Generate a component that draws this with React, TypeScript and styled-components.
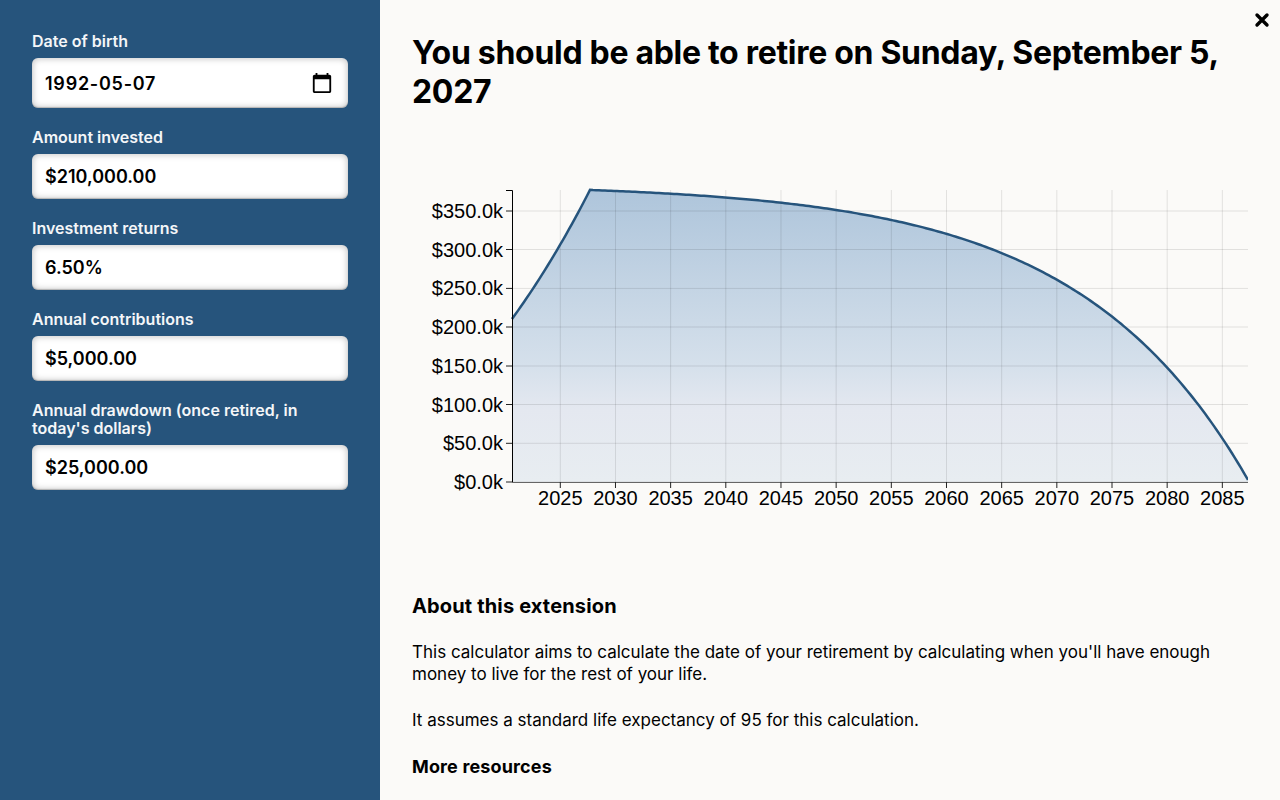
import React from "react";
import styled, { createGlobalStyle } from "styled-components";

const Global = createGlobalStyle`
  html, body { margin: 0; padding: 0; height: 100%; overflow: hidden; }
  body { font-family: Inter, "Liberation Sans", sans-serif; background: #fbfaf8; color: #000; }
`;
const Page = styled.div`display: flex; height: 800px; overflow: hidden; position: relative;`;
const Sidebar = styled.aside`
  width: 380px; flex: none; box-sizing: border-box; background: #26547c;
  padding: 32px; display: flex; flex-direction: column; gap: 20px;
`;
const Field = styled.div`display: flex; flex-direction: column; gap: 8px;`;
const Label = styled.label`color: #f4f6f8; font-size: 16px; line-height: 18px; font-weight: 600;`;
const InputBox = styled.div<{ $tall?: boolean }>`
  height: ${p => (p.$tall ? 50 : 45)}px; box-sizing: border-box; background: #fff; border-radius: 6px;
  box-shadow: inset 0 0 6px 1px rgba(0,0,0,.22), inset 0 -1px 1px rgba(0,0,0,.2);
  display: flex; align-items: center; padding: 0 15px 0 13px;
`;
const TextInput = styled.input<{ $date?: boolean }>`
  flex: 1; min-width: 0; border: 0; outline: 0; background: transparent; padding: 0;
  font: 600 18px Inter, sans-serif; color: #000;
  letter-spacing: ${p => (p.$date ? "0.75px" : "0")};
`;
const Main = styled.main`flex: 1; min-width: 0; box-sizing: border-box; padding: 33px 32px 0;`;
const Title = styled.h1`margin: 0; font-size: 32px; line-height: 39px; font-weight: 700; letter-spacing: -0.3px;`;
const ChartSvg = styled.svg`display: block; margin-top: 39px; width: 836px; height: 400px;`;
const Heading = styled.h2`margin: 44px 0 0; font-size: 20px; line-height: 24px; font-weight: 700; letter-spacing: 0.15px;`;
const Para = styled.p`margin: 23px 0 24px; font-size: 17px; line-height: 22px; font-weight: 400;`;
const Sub = styled.h3`margin: 25px 0 0; font-size: 18px; line-height: 22px; font-weight: 700; letter-spacing: 0.14px;`;
const CloseButton = styled.button`
  position: absolute; top: 12px; right: 10px; width: 16px; height: 16px; padding: 0; border: 0;
  background: none; display: block;
`;
const AxisText = styled.text`font: 20px "Liberation Sans", Arial, sans-serif; fill: #000;`;

function heightAt(x: number) {
  return x <= 590 ? -144 + 307 * Math.exp(0.0045 * (x - 512)) : 298.1 - 6.1 * Math.exp(0.0059 * (x - 590));
}
const xs: number[] = [];
for (let x = 512; x < 1248; x += 3) xs.push(x);
xs.push(590, 1248);
xs.sort((a, b) => a - b);
const line = xs.map((x, i) => `${i ? "L" : "M"}${x},${(482 - heightAt(x)).toFixed(2)}`).join("");

const OX = 412, OY = 150;
const yTicks = [["$0.0k",482],["$50.0k",443.3],["$100.0k",404.5],["$150.0k",366],["$200.0k",327],["$250.0k",288.4],["$300.0k",249.5],["$350.0k",211]] as const;
const xTicks = Array.from({ length: 13 }, (_, i) => ({ label: String(2025 + i * 5), x: 560.3 + i * 55.17 }));

function Chart() {
  return (
    <ChartSvg viewBox={`${OX} ${OY} 836 400`}>
      <defs>
        <linearGradient id="fill" x1="0" y1="190" x2="0" y2="482" gradientUnits="userSpaceOnUse">
          <stop offset="0" stopColor="#aec5db" />
          <stop offset="0.6" stopColor="#d5e0eb" />
          <stop offset="0.75" stopColor="#e4e8f0" />
          <stop offset="1" stopColor="#e8edf1" />
        </linearGradient>
      </defs>
      <path d={`${line}L1248,482L512,482Z`} fill="url(#fill)" />
      {yTicks.map(([, y]) => <line key={y} x1={512} x2={1248} y1={y} y2={y} stroke="#000" strokeOpacity={0.1} />)}
      {xTicks.map(t => <line key={t.x} x1={t.x} x2={t.x} y1={190} y2={482} stroke="#000" strokeOpacity={0.1} />)}
      <path d={line} fill="none" stroke="#26547c" strokeWidth={2.5} />
      <path d="M506,190.5H512.5V482" fill="none" stroke="#000" />
      <line x1={512} x2={1248} y1={482.5} y2={482.5} stroke="#666" />
      {yTicks.map(([label, y]) => (
        <g key={label}>
          <line x1={506} x2={512} y1={y} y2={y} stroke="#222" />
          <AxisText x={503} y={y + 7} textAnchor="end">{label}</AxisText>
        </g>
      ))}
      {xTicks.map(t => (
        <g key={t.label}>
          <line x1={t.x} x2={t.x} y1={482} y2={488} stroke="#222" />
          <AxisText x={t.x} y={505} textAnchor="middle">{t.label}</AxisText>
        </g>
      ))}
    </ChartSvg>
  );
}

const fields = [
  ["Amount invested", "$210,000.00"],
  ["Investment returns", "6.50%"],
  ["Annual contributions", "$5,000.00"],
  ["Annual drawdown (once retired, in today's dollars)", "$25,000.00"],
];

export default function App() {
  return (
    <Page>
      <Global />
      <Sidebar>
        <Field>
          <Label>Date of birth</Label>
          <InputBox $tall>
            <TextInput $date readOnly value="1992-05-07" />
            <svg width="22" height="22" viewBox="0 0 24 24">
              <path d="M20 3h-1V1h-2v2H7V1H5v2H4c-1.1 0-2 .9-2 2v16c0 1.1.9 2 2 2h16c1.1 0 2-.9 2-2V5c0-1.1-.9-2-2-2zm0 18H4V8h16v13z" fill="#000" />
            </svg>
          </InputBox>
        </Field>
        {fields.map(([l, v]) => (
          <Field key={l}>
            <Label>{l}</Label>
            <InputBox><TextInput readOnly value={v} /></InputBox>
          </Field>
        ))}
      </Sidebar>
      <Main>
        <Title>You should be able to retire on Sunday, September 5, 2027</Title>
        <Chart />
        <Heading>About this extension</Heading>
        <Para>This calculator aims to calculate the date of your retirement by calculating when you'll have enough money to live for the rest of your life.</Para>
        <Para>It assumes a standard life expectancy of 95 for this calculation.</Para>
        <Sub>More resources</Sub>
      </Main>
      <CloseButton aria-label="Close">
        <svg width="16" height="16" viewBox="0 0 16 16"><path d="M3 3L13 13M13 3L3 13" stroke="#000" strokeWidth="3.4" strokeLinecap="round" /></svg>
      </CloseButton>
    </Page>
  );
}
